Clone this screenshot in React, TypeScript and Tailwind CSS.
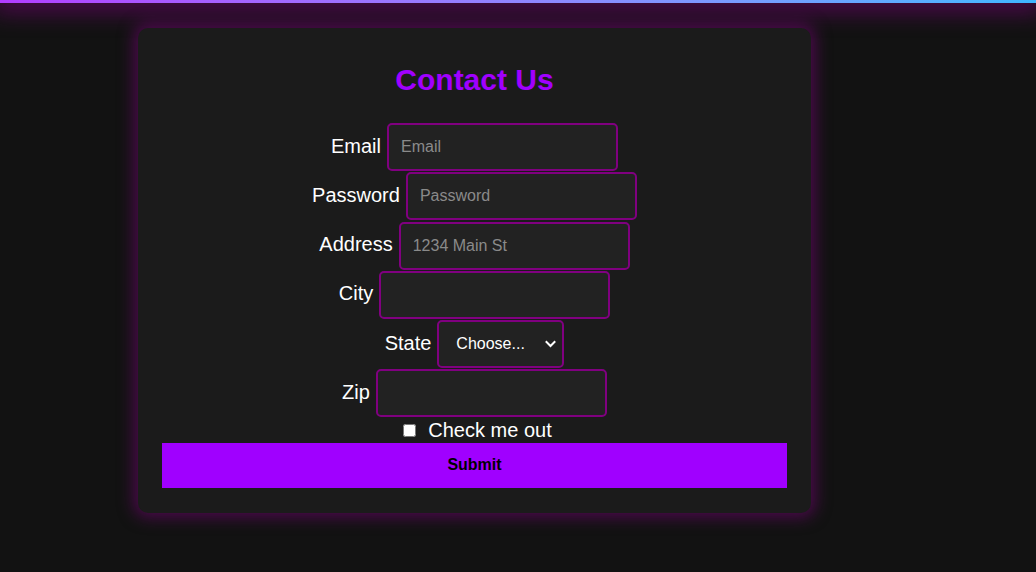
import React from "react";

const inputCls =
  "h-[48px] w-[231px] rounded-[5px] border-2 border-[#800080] bg-[#222222] px-[12px] text-[16px] text-white placeholder:text-[#8a8a8a] outline-none";

function Row({ label, children }: { label: string; children: React.ReactNode }) {
  return (
    <div className="flex items-center justify-center gap-[6px]">
      <label className="text-[20px] leading-[23px] text-white mb-[2px]">{label}</label>
      {children}
    </div>
  );
}

export default function App() {
  return (
    <div
      className="min-h-[572px] w-full bg-[#121212]"
      style={{ fontFamily: '"Liberation Sans", Arial, sans-serif' }}
    >
      <div className="h-[3px] w-full bg-gradient-to-r from-[#b23cff] to-[#3cb8ff] shadow-[0_0_24px_6px_rgba(128,0,128,0.8)]" />
      <div className="pl-[138px] pt-[25px]">
        <div className="w-[673px] rounded-[10px] bg-[#1b1b1b] px-[24px] pt-[35px] pb-[25px] shadow-[0_0_16px_4px_rgba(128,0,128,0.55)]">
          <h2 className="text-center text-[30px] font-bold leading-[34px] text-[#a000ff]">Contact Us</h2>
          <form className="mt-[26px] flex flex-col gap-[1.3px]" onSubmit={(e) => e.preventDefault()}>
            <Row label="Email">
              <input type="email" placeholder="Email" className={inputCls} />
            </Row>
            <Row label="Password">
              <input type="password" placeholder="Password" className={inputCls} />
            </Row>
            <Row label="Address">
              <input type="text" placeholder="1234 Main St" className={inputCls} />
            </Row>
            <Row label="City">
              <input type="text" className={inputCls} />
            </Row>
            <Row label="State">
              <div className="relative">
                <select className="h-[48px] w-[127px] appearance-none rounded-[5px] border-2 border-[#800080] bg-[#222222] pl-[17px] text-[16px] text-white outline-none">
                  <option>Choose...</option>
                  <option>...</option>
                </select>
                <svg
                  className="pointer-events-none absolute right-[8px] top-[20px]"
                  width="11"
                  height="8"
                  viewBox="0 0 11 8"
                  fill="none"
                >
                  <path d="M1.5 2l4 4 4-4" stroke="white" strokeWidth="2" strokeLinecap="square" />
                </svg>
              </div>
            </Row>
            <Row label="Zip">
              <input type="text" className={inputCls} />
            </Row>
            <div className="flex h-[22.5px] items-center justify-center gap-[12px] pl-[6px]">
              <input type="checkbox" className="m-0 h-[13px] w-[13px]" />
              <span className="text-[20px] leading-[23px] text-white">Check me out</span>
            </div>
            <button
              type="submit"
              className="h-[45px] w-full bg-[#a000ff] text-[16px] font-bold text-black"
            >
              Submit
            </button>
          </form>
        </div>
      </div>
    </div>
  );
}
